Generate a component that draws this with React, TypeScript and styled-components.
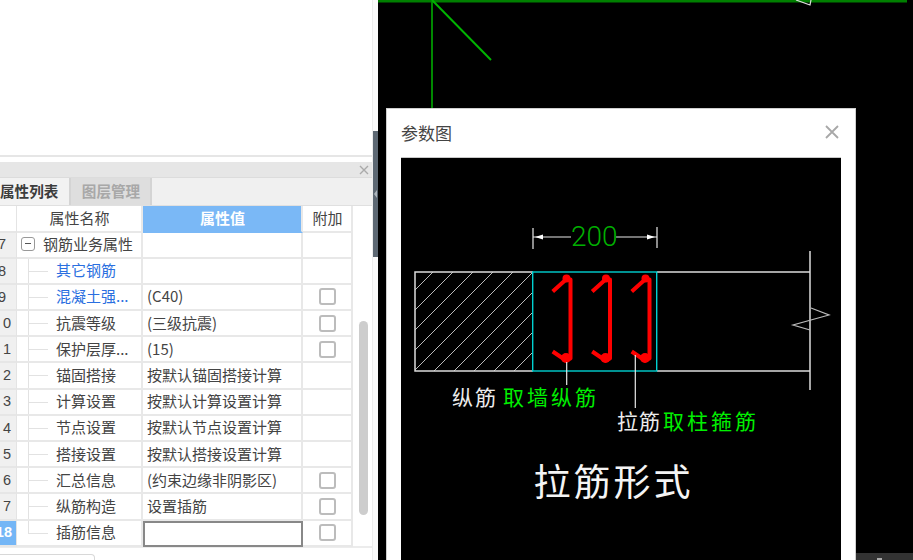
import React from "react";
import styled, { createGlobalStyle } from "styled-components";

const CJK = `"Noto Sans CJK SC", "Liberation Sans", sans-serif`;

const Global = createGlobalStyle`
  html, body { margin: 0; padding: 0; width: 913px; height: 560px; overflow: hidden; background: #fff; }
  #root { width: 913px; height: 560px; }
`;

const Page = styled.div`
  display: flex;
  width: 913px;
  height: 560px;
  overflow: hidden;
  font-family: ${CJK};
  color: #444;
`;

const LeftPanel = styled.section`
  width: 373px;
  height: 560px;
  flex: none;
  display: flex;
  flex-direction: column;
  overflow: hidden;
  background: #fff;
  border-right: 1px solid #ececec;
  box-sizing: border-box;
`;

const TopArea = styled.div`
  height: 155px;
  flex: none;
  border-bottom: 2px solid #e6e6e6;
  box-sizing: content-box;
  margin-bottom: 5px;
`;

const TitleBar = styled.div`
  height: 15px;
  flex: none;
  background: #e6e6e6;
  border-bottom: 1px solid #dcdcdc;
  display: flex;
  align-items: center;
  justify-content: flex-end;
  padding-right: 3px;
`;

const TabBar = styled.div`
  height: 27px;
  flex: none;
  background: #f0f0f0;
  border-bottom: 1px solid #e0e0e0;
  display: flex;
  box-sizing: content-box;
`;

const Tab = styled.div<{ $active?: boolean }>`
  height: 27px;
  display: flex;
  align-items: center;
  justify-content: ${(p) => (p.$active ? "flex-start" : "center")};
  box-sizing: border-box;
  font-size: 14.6px;
  font-weight: 700;
  color: ${(p) => (p.$active ? "#3c3c3c" : "#a8a8a8")};
  background: ${(p) => (p.$active ? "#f2f2f2" : "#dedede")};
  border-right: 2px solid #d4d4d4;
  width: ${(p) => (p.$active ? "71px" : "81px")};
  padding-left: ${(p) => (p.$active ? "0" : "1px")};
  padding-bottom: 3px;
  white-space: nowrap;
`;

const TableWrap = styled.div`
  display: flex;
  flex: none;
  height: 342px;
  border-bottom: 2px solid #ececec;
  box-sizing: border-box;
`;

const Table = styled.div`
  width: 364px;
  margin-left: -11px;
  flex: none;
`;

const Row = styled.div<{ $head?: boolean }>`
  display: grid;
  grid-template-columns: 28px 126px 160px 50px;
  height: ${(p) => (p.$head ? "26.5px" : "26.2px")};
  font-size: 15px;
  line-height: 1;
  box-sizing: border-box;
`;

const NumCell = styled.div<{ $selected?: boolean; $head?: boolean; $narrow?: boolean }>`
  display: flex;
  align-items: center;
  justify-content: flex-end;
  padding-right: ${(p) => (p.$narrow ? "10px" : p.$selected ? "4px" : "5px")};
  background: ${(p) => (p.$selected ? "#74b6f6" : p.$head ? "#fff" : "#f0f0f0")};
  color: ${(p) => (p.$selected ? "#fff" : "#444")};
  font-weight: ${(p) => (p.$selected ? 700 : 400)};
  border-right: 1px solid #e4e4e4;
  border-bottom: 2px solid #e6e6e6;
  box-sizing: border-box;
  font-family: "Liberation Sans", sans-serif;
  font-size: 14.5px;
  white-space: nowrap;
`;

const HeadCell = styled.div<{ $accent?: boolean }>`
  display: flex;
  align-items: center;
  justify-content: center;
  padding: 0 0 2px 1px;
  background: ${(p) => (p.$accent ? "#7ab8f6" : "#fff")};
  color: ${(p) => (p.$accent ? "#fff" : "#444")};
  font-weight: ${(p) => (p.$accent ? 700 : 400)};
  border-right: 2px solid #e8e8e8;
  border-bottom: 2px solid ${(p) => (p.$accent ? "#7ab8f6" : "#e8e8e8")};
  box-sizing: border-box;
`;

const treeBg = (last?: boolean) => `
  background-image:
    linear-gradient(#e2e2e2, #e2e2e2),
    linear-gradient(#e2e2e2, #e2e2e2);
  background-repeat: no-repeat;
  background-size: 1px ${last ? "50%" : "100%"}, 20px 1px;
  background-position: 11px 0, 11px 12px;
`;

const NameCell = styled.div<{ $tree?: boolean; $last?: boolean; $link?: boolean }>`
  display: flex;
  align-items: center;
  padding-left: ${(p) => (p.$tree ? "39px" : "4px")};
  padding-bottom: 2px;
  gap: 8px;
  color: ${(p) => (p.$link ? "#2a6fe0" : "#444")};
  border-right: 2px solid #e8e8e8;
  border-bottom: 2px solid #e8e8e8;
  box-sizing: border-box;
  white-space: nowrap;
  ${(p) => (p.$tree ? treeBg(p.$last) : "")}
`;

const Collapse = styled.span`
  width: 14px;
  height: 14px;
  flex: none;
  border: 1px solid #999;
  border-radius: 3px;
  box-sizing: border-box;
  display: flex;
  align-items: center;
  justify-content: center;
  &::after {
    content: "";
    width: 6px;
    height: 1px;
    background: #555;
  }
`;

const ValueCell = styled.div<{ $editing?: boolean }>`
  display: flex;
  align-items: center;
  padding: 0 0 2px 4px;
  white-space: nowrap;
  overflow: hidden;
  box-sizing: border-box;
  border-right: 2px solid #e8e8e8;
  border-bottom: 2px solid #e8e8e8;
  ${(p) => (p.$editing ? "border: 2px solid #888;" : "")}
`;

const ExtraCell = styled.div`
  display: flex;
  align-items: center;
  justify-content: center;
  border-right: 2px solid #e8e8e8;
  border-bottom: 2px solid #e8e8e8;
  box-sizing: border-box;
`;

const Check = styled.span`
  width: 17px;
  height: 17px;
  box-sizing: border-box;
  border: 2px solid #bcbcbc;
  border-radius: 3px;
  background: #fff;
`;

const ScrollTrack = styled.div`
  flex: 1;
  padding: 115px 0 0 6px;
`;

const ScrollThumb = styled.div`
  width: 9px;
  height: 194px;
  background: #cdcdcd;
  border-radius: 5px;
`;

const BottomTab = styled.div`
  margin-top: 6px;
  width: 95px;
  height: 12px;
  flex: none;
  box-sizing: border-box;
  border: 1px solid #d8d8d8;
  border-left: none;
  border-radius: 0 4px 0 0;
`;

const Splitter = styled.div`
  width: 5px;
  flex: none;
  background: #fafafa;
  padding-top: 131px;
  box-sizing: border-box;
`;

const SplitterGrip = styled.div`
  height: 126px;
  background: #5d6873;
  display: flex;
  align-items: center;
  justify-content: center;
  &::before {
    content: "";
    width: 0;
    height: 0;
    border-top: 4px solid transparent;
    border-bottom: 4px solid transparent;
    border-right: 3px solid #aeb6bd;
  }
`;

const Canvas = styled.main`
  flex: 1;
  position: relative;
  background: #000;
  overflow: hidden;
`;

const CadLines = styled.svg`
  position: absolute;
  left: 0;
  top: 0;
  display: block;
`;

const Dialog = styled.div`
  position: absolute;
  left: 8px;
  top: 108px;
  width: 470px;
  height: 460px;
  background: #fff;
  border: 1px solid #cfcfcf;
  box-sizing: border-box;
  display: flex;
  flex-direction: column;
  padding: 0 14px;
`;

const DialogHeader = styled.header`
  height: 48px;
  flex: none;
  display: flex;
  align-items: center;
  justify-content: space-between;
  font-size: 17px;
  color: #444;
  padding-bottom: 2px;
  padding-right: 1px;
  box-sizing: border-box;
`;

const CloseIcon = styled.svg`
  display: block;
`;

const Figure = styled.svg`
  display: block;
  width: 440px;
  height: 402px;
  flex: none;
  background: #000;
  border-top: 1px solid #c8c8c8;
  box-sizing: content-box;
`;

const StatusBar = styled.div`
  position: absolute;
  left: 478px;
  top: 553px;
  width: 57px;
  height: 7px;
  background: #333;
  overflow: hidden;
  &::before {
    content: "";
    display: block;
    width: 5px;
    height: 2px;
    margin: 5px 0 0 21px;
    background: #aaa;
  }
`;

const Label = styled.text<{ $size: number; $fill: string; $gap?: number }>`
  font-family: ${CJK};
  font-size: ${(p) => p.$size}px;
  fill: ${(p) => p.$fill};
  font-weight: 400;
  letter-spacing: ${(p) => p.$gap ?? 0}px;
`;

const DimText = styled.text`
  font-family: Roboto, "Liberation Sans", sans-serif;
  font-weight: 300;
  font-size: 28px;
  fill: #00b000;
`;

type RowData = {
  n: string;
  name: string;
  value?: string;
  check?: boolean;
  link?: boolean;
  narrow?: boolean;
};

const rows: RowData[] = [
  { n: "8", name: "其它钢筋", link: true, narrow: true },
  { n: "9", name: "混凝土强...", value: "(C40)", check: true, link: true, narrow: true },
  { n: "0", name: "抗震等级", value: "(三级抗震)", check: true },
  { n: "1", name: "保护层厚...", value: "(15)", check: true },
  { n: "2", name: "锚固搭接", value: "按默认锚固搭接计算" },
  { n: "3", name: "计算设置", value: "按默认计算设置计算" },
  { n: "4", name: "节点设置", value: "按默认节点设置计算" },
  { n: "5", name: "搭接设置", value: "按默认搭接设置计算" },
  { n: "6", name: "汇总信息", value: "(约束边缘非阴影区)", check: true },
  { n: "7", name: "纵筋构造", value: "设置插筋", check: true },
];

const Hook: React.FC<{ dx: number }> = ({ dx }) => (
  <g transform={`translate(${dx} 0)`} fill="none" stroke="#f00">
    <path
      d="M552.7 291.5 L566 279.5 L570.5 279.5 L570.5 358.5 L566 360.5 L552.7 351.5"
      strokeWidth="4"
      strokeLinejoin="round"
    />
    <circle cx="566.5" cy="278.5" r="4" fill="#f00" stroke="none" />
    <circle cx="566" cy="358" r="5" fill="#f00" stroke="none" />
  </g>
);

const hatch = [705, 725, 745, 765, 785, 805, 825, 845, 865, 885];

export default function App() {
  return (
    <Page>
      <Global />
      <LeftPanel>
        <TopArea />
        <TitleBar>
          <svg width="10" height="10" viewBox="0 0 10 10">
            <path d="M1 1L9 9M9 1L1 9" stroke="#aaa" strokeWidth="1.4" />
          </svg>
        </TitleBar>
        <TabBar>
          <Tab $active>属性列表</Tab>
          <Tab>图层管理</Tab>
        </TabBar>
        <TableWrap>
          <Table>
            <Row $head>
              <NumCell $head />
              <HeadCell>属性名称</HeadCell>
              <HeadCell $accent>属性值</HeadCell>
              <HeadCell>附加</HeadCell>
            </Row>
            <Row>
              <NumCell $narrow>7</NumCell>
              <NameCell>
                <Collapse />
                钢筋业务属性
              </NameCell>
              <ValueCell />
              <ExtraCell />
            </Row>
            {rows.map((r) => (
              <Row key={r.name}>
                <NumCell $narrow={r.narrow}>{r.n}</NumCell>
                <NameCell $tree $link={r.link}>
                  {r.name}
                </NameCell>
                <ValueCell>{r.value}</ValueCell>
                <ExtraCell>{r.check && <Check />}</ExtraCell>
              </Row>
            ))}
            <Row>
              <NumCell $selected>18</NumCell>
              <NameCell $tree $last>
                插筋信息
              </NameCell>
              <ValueCell $editing />
              <ExtraCell>
                <Check />
              </ExtraCell>
            </Row>
          </Table>
          <ScrollTrack>
            <ScrollThumb />
          </ScrollTrack>
        </TableWrap>
        <BottomTab />
      </LeftPanel>
      <Splitter>
        <SplitterGrip />
      </Splitter>
      <Canvas>
        <CadLines width="535" height="560" viewBox="378 0 535 560">
          <rect x="378" y="0" width="529" height="2.5" fill="#007f00" />
          <rect x="431" y="0" width="2" height="108" fill="#008800" />
          <path d="M432 0L491 60" stroke="#00b400" strokeWidth="2" fill="none" />
          <path d="M796 0L810 5L811 0" stroke="#ddd" strokeWidth="1.2" fill="none" />
        </CadLines>
        <Dialog>
          <DialogHeader>
            参数图
            <CloseIcon width="16" height="16" viewBox="0 0 16 16">
              <path d="M2 2L14 14M14 2L2 14" stroke="#a8a8a8" strokeWidth="1.8" />
            </CloseIcon>
          </DialogHeader>
          <Figure viewBox="401 158 440 402">
            <defs>
              <clipPath id="hatchClip">
                <rect x="415" y="272" width="118" height="99" />
              </clipPath>
            </defs>
            <g clipPath="url(#hatchClip)" stroke="#d0d0d0" strokeWidth="0.9">
              {hatch.map((c) => (
                <line key={c} x1={c - 272} y1="272" x2={c - 371} y2="371" />
              ))}
            </g>
            <path
              d="M533 272H415V371H533M657 272H810M657 371H810M810 251V390"
              stroke="#dcdcdc"
              strokeWidth="1.5"
              fill="none"
            />
            <rect x="532.7" y="272" width="124" height="99" fill="none" stroke="#00d0d0" strokeWidth="1.4" />
            <path d="M811 308L829 315L793 325L810 330" stroke="#bbb" strokeWidth="1.2" fill="none" />
            <path
              d="M533 228V249M657 227V248M533 237H571M616 237H657"
              stroke="#e8e8e8"
              strokeWidth="1.2"
              fill="none"
            />
            <path d="M535 237L543 234.5V239.5ZM655 237L647 234.5V239.5Z" fill="#fff" />
            <DimText x="571" y="246">200</DimText>
            <Hook dx={0} />
            <Hook dx={39.5} />
            <Hook dx={79} />
            <path d="M566.7 362V385M635.3 355V408" stroke="#e8e8e8" strokeWidth="1.2" fill="none" />
            <Label x="452" y="404.5" $size={21} $fill="#ececec" $gap={2}>纵筋</Label>
            <Label x="503" y="404.5" $size={21} $fill="#00f000" $gap={3}>取墙纵筋</Label>
            <Label x="617" y="428.5" $size={21} $fill="#ececec" $gap={1}>拉筋</Label>
            <Label x="663" y="428.5" $size={21} $fill="#00f000" $gap={3}>取柱箍筋</Label>
            <Label x="533.5" y="495.5" $size={37} $fill="#f4f4f4" $gap={3}>拉筋形式</Label>
          </Figure>
        </Dialog>
        <StatusBar />
      </Canvas>
    </Page>
  );
}
